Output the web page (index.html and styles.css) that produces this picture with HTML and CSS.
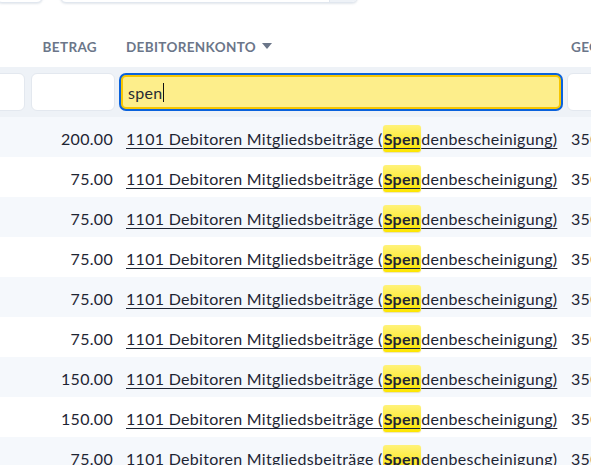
FILE: index.html
```html
<!DOCTYPE html>
<html lang="de">
<head>
<meta charset="utf-8">
<title>Buchungen</title>
<link rel="stylesheet" href="styles.css">
</head>
<body>
<div class="toolbar">
  <div class="tool-box tool-small"></div>
  <div class="tool-box tool-search"><span class="tool-btn"></span></div>
</div>
<div class="grid">
  <div class="row head">
    <div class="cell c0"></div>
    <div class="cell c1 num">BETRAG</div>
    <div class="cell c2">DEBITORENKONTO <span class="caret-down"></span></div>
    <div class="cell c3">GEGENKONTO</div>
  </div>
  <div class="row filters">
    <div class="fcell c0"><div class="finput"></div></div>
    <div class="fcell c1"><div class="finput"></div></div>
    <div class="fcell c2"><div class="finput active">spen<span class="text-caret"></span></div></div>
    <div class="fcell c3"><div class="finput"></div></div>
  </div>
  <div class="body" id="rows"></div>
</div>
<script src="app.js"></script>
</body>
</html>
```
FILE: styles.css
```css
* { box-sizing: border-box; }
html, body { margin: 0; background: #fff; }
body {
  font-family: "Lato", "Noto Sans", sans-serif;
  color: #1e2533;
  width: 591px;
  height: 465px;
  overflow: hidden;
}

.toolbar {
  height: 26px;
  display: flex;
  align-items: flex-start;
  overflow: hidden;
}
.tool-box {
  height: 32px;
  margin-top: -29px;
  border: 1px solid #e1e7ef;
  border-radius: 6px;
  background: #fff;
  box-shadow: 0 1px 2px rgba(148, 163, 184, 0.25);
}
.tool-small { width: 47px; margin-left: -4px; }
.tool-search {
  width: 298px;
  margin-left: 17px;
  display: flex;
  justify-content: flex-end;
  overflow: hidden;
}
.tool-btn { width: 28px; background: #eef2f7; border-left: 1px solid #e1e7ef; }

.grid { display: flex; flex-direction: column; }
.row { display: flex; }
.c0 { width: 28px; flex: none; }
.c1 { width: 90px; flex: none; }
.c2 { width: 446px; flex: none; }
.c3 { flex: 1; min-width: 0; }

.head { height: 41px; align-items: center; }
.head .cell {
  font-size: 13.5px;
  font-weight: 700;
  letter-spacing: 0.35px;
  color: #6b7689;
  white-space: nowrap;
  overflow: hidden;
}
.head .c1 { padding-right: 21px; text-align: right; }
.head .c2 { padding-left: 8px; display: flex; align-items: center; gap: 6px; }
.head .c3 { padding-left: 7px; }
.caret-down {
  width: 0; height: 0;
  border-left: 5px solid transparent;
  border-right: 5px solid transparent;
  border-top: 6px solid #6b7689;
  margin-top: -1px;
}

.filters {
  height: 50px;
  background: #eef2f7;
  padding: 6px 0;
}
.fcell { padding: 0 3px; }
.finput {
  height: 38px;
  background: #fff;
  border: 1px solid #e3e8ef;
  border-radius: 6px;
  font-size: 16px;
  letter-spacing: 0.3px;
  display: flex;
  align-items: center;
  padding-left: 6px;
  color: #262b33;
}
.c0 .finput { margin-left: -10px; }
.c3 .finput { margin-right: -10px; }
.finput.active {
  margin: 2px 0 0;
  background: #fdee8b;
  border: 2px solid #f7c600;
  box-shadow: 0 0 0 2px #0a62dc;
  border-radius: 5px;
  height: 34px;
  padding-left: 5px;
}
.text-caret {
  display: inline-block;
  width: 1px;
  height: 19px;
  background: #111;
  margin-left: 1px;
}

.body { display: flex; flex-direction: column; }
.body .row { height: 40px; align-items: center; font-size: 16px; letter-spacing: 0.3px; white-space: nowrap; }
.body .row:nth-child(odd) { background: #f5f8fc; }
.body .c1 { text-align: right; padding-right: 5px; padding-top: 3px; }
.body .c2 { padding-left: 8px; padding-top: 3px; }
.body .c3 { padding-left: 7px; padding-top: 3px; overflow: hidden; }
.link { color: #1e2533; text-decoration: underline; text-underline-offset: 3px; text-decoration-thickness: 1px; }
.hl {
  font-weight: 700;
  background: linear-gradient(#fff27a, #fde600);
  border-radius: 3px;
  padding: 4px 1px 4px;
  box-shadow: 0 1px 1px rgba(180, 150, 0, 0.25);
}
```
FILE: app.js
```js
// Buchungszeilen rendern
const amounts = ["200.00", "75.00", "75.00", "75.00", "75.00", "75.00", "150.00", "150.00", "75.00"];
const rows = document.getElementById("rows");
for (const a of amounts) {
  const r = document.createElement("div");
  r.className = "row";
  r.innerHTML =
    '<div class="cell c0"></div>' +
    '<div class="cell c1">' + a + '</div>' +
    '<div class="cell c2"><a class="link" href="#">1101 Debitoren Mitgliedsbeiträge (<span class="hl">Spen</span>denbescheinigung)</a></div>' +
    '<div class="cell c3"><a class="link" href="#">3500 Spenden</a></div>';
  rows.appendChild(r);
}
```
